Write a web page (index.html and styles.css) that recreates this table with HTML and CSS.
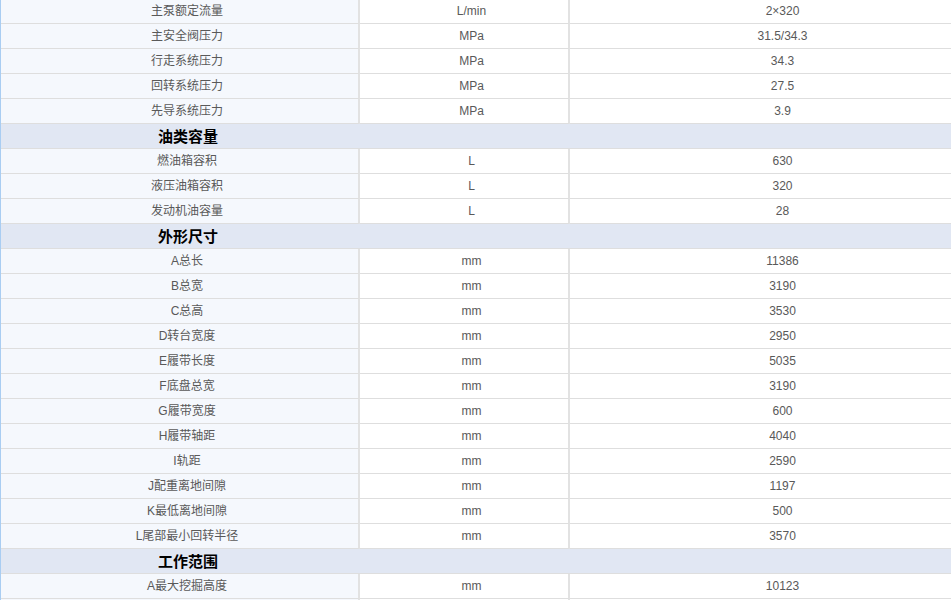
FILE: index.html
```html
<!DOCTYPE html>
<html lang="zh">
<head>
<meta charset="utf-8">
<title>参数</title>
<link rel="stylesheet" href="styles.css">
</head>
<body>
<div class="wrap">
<table class="spec">
<colgroup><col class="c1"><col class="c2"><col class="c3"></colgroup>
<tbody>
<tr><td>主泵额定流量</td><td>L/min</td><td>2×320</td></tr>
<tr><td>主安全阀压力</td><td>MPa</td><td>31.5/34.3</td></tr>
<tr><td>行走系统压力</td><td>MPa</td><td>34.3</td></tr>
<tr><td>回转系统压力</td><td>MPa</td><td>27.5</td></tr>
<tr><td>先导系统压力</td><td>MPa</td><td>3.9</td></tr>
<tr class="sec"><td colspan="3"><div class="sec-title">油类容量</div></td></tr>
<tr><td>燃油箱容积</td><td>L</td><td>630</td></tr>
<tr><td>液压油箱容积</td><td>L</td><td>320</td></tr>
<tr><td>发动机油容量</td><td>L</td><td>28</td></tr>
<tr class="sec"><td colspan="3"><div class="sec-title">外形尺寸</div></td></tr>
<tr><td>A总长</td><td>mm</td><td>11386</td></tr>
<tr><td>B总宽</td><td>mm</td><td>3190</td></tr>
<tr><td>C总高</td><td>mm</td><td>3530</td></tr>
<tr><td>D转台宽度</td><td>mm</td><td>2950</td></tr>
<tr><td>E履带长度</td><td>mm</td><td>5035</td></tr>
<tr><td>F底盘总宽</td><td>mm</td><td>3190</td></tr>
<tr><td>G履带宽度</td><td>mm</td><td>600</td></tr>
<tr><td>H履带轴距</td><td>mm</td><td>4040</td></tr>
<tr><td>I轨距</td><td>mm</td><td>2590</td></tr>
<tr><td>J配重离地间隙</td><td>mm</td><td>1197</td></tr>
<tr><td>K最低离地间隙</td><td>mm</td><td>500</td></tr>
<tr><td>L尾部最小回转半径</td><td>mm</td><td>3570</td></tr>
<tr class="sec"><td colspan="3"><div class="sec-title">工作范围</div></td></tr>
<tr><td>A最大挖掘高度</td><td>mm</td><td>10123</td></tr>
<tr class="tail"><td></td><td></td><td></td></tr>
</tbody>
</table>
</div>
</body>
</html>
```
FILE: styles.css
```css
html, body {
  margin: 0;
  padding: 0;
  background: #ffffff;
  overflow: hidden;
}
.wrap {
  width: 951px;
  height: 600px;
  overflow: hidden;
}
.spec {
  margin-top: -1px;
  width: 980px;
  table-layout: fixed;
  border-collapse: separate;
  border-spacing: 0;
  border-left: 1px solid #a9cdf2;
  font-family: "Liberation Sans", "Noto Sans CJK SC", sans-serif;
  font-size: 12px;
  color: #595959;
}
.c1 { width: 359px; }
.c2 { width: 210px; }
.c3 { width: 410px; }
.spec td {
  box-sizing: border-box;
  height: 25px;
  padding: 0 0 0 15px;
  line-height: 24px;
  text-align: center;
  white-space: nowrap;
  border-bottom: 1px solid #dedede;
  background: #ffffff;
}
.spec td:nth-child(1) {
  background: #f5f8fd;
  border-right: 2px solid #e2e2e2;
}
.spec td:nth-child(2) {
  border-right: 2px solid #e2e2e2;
}
.spec .sec td {
  padding: 0;
  background: #e1e7f3;
  border-right: none;
}
.sec-title {
  box-sizing: border-box;
  width: 359px;
  padding-left: 15px;
  text-align: center;
  font-family: "Noto Sans CJK SC", sans-serif;
  font-size: 15px;
  font-weight: bold;
  color: #000000;
  line-height: 24px;
}
```
